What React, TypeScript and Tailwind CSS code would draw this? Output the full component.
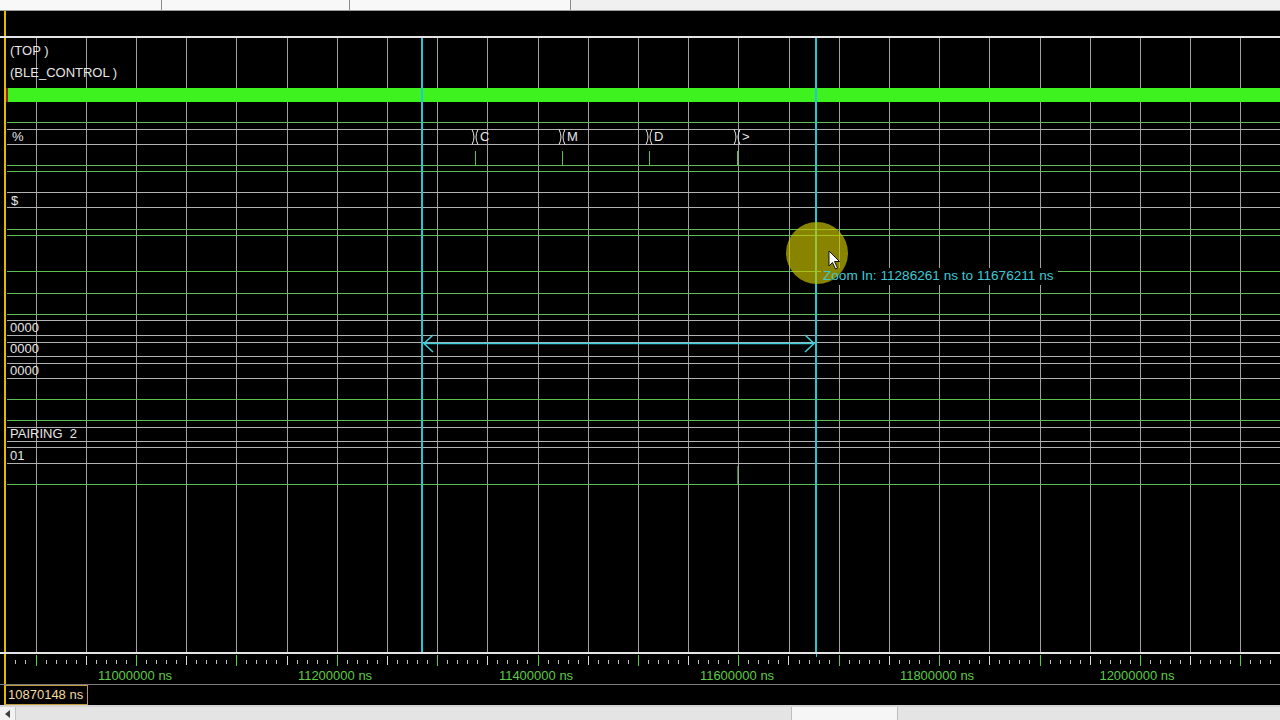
import React from 'react';

const GREEN = '#5cbf52';
const GRAY = '#b2b2b2';

// horizontal trace lines of the wave window (absolute y)
const HLINES: [number, 'g' | 'w'][] = [
  [122, 'g'], [129, 'w'], [144, 'w'], [165, 'g'], [171, 'g'],
  [192, 'w'], [207, 'w'], [229, 'g'], [235, 'g'], [271, 'g'],
  [293, 'g'], [314, 'g'], [320, 'w'], [335, 'w'], [342, 'w'],
  [356, 'w'], [363, 'w'], [378, 'w'], [399, 'g'], [420, 'g'],
  [427, 'w'], [441, 'w'], [447, 'w'], [463, 'w'], [484, 'g'],
];

const GRID_X = Array.from({ length: 25 }, (_, k) => Math.round(35.5 + 50.2 * k) + 0.5);

const BUS_EDGES = [475, 562, 649, 737];

const TICKS = Array.from({ length: 130 }, (_, k) => k - 13)
  .map((i) => ({ i, x: Math.round(135.9 + i * 10.04) + 0.5 }))
  .filter((t) => t.x > 7 && t.x < 1280);

const RULER_LABELS = [
  { text: '11000000 ns', cls: 'left-[135px]' },
  { text: '11200000 ns', cls: 'left-[335px]' },
  { text: '11400000 ns', cls: 'left-[536px]' },
  { text: '11600000 ns', cls: 'left-[737px]' },
  { text: '11800000 ns', cls: 'left-[937px]' },
  { text: '12000000 ns', cls: 'left-[1137px]' },
];

function WaveArea() {
  return (
    <div className="relative h-[614px] bg-black">
      <svg width="1280" height="614" viewBox="0 38 1280 614" className="block" shapeRendering="crispEdges">
        {/* grid */}
        {GRID_X.map((x) => (
          <line key={x} x1={x} y1={38} x2={x} y2={652} stroke="#a0a0a0" strokeWidth={1} />
        ))}
        {HLINES.map(([y, c]) => (
          <line key={y} x1={7} y1={y + 0.5} x2={1280} y2={y + 0.5} stroke={c === 'g' ? GREEN : GRAY} strokeWidth={1.2} />
        ))}
        {/* top bus */}
        <rect x={7} y={88} width={1273} height={14} fill="#3ef21f" />
        <rect x={6} y={88} width={2} height={14} fill="#8a2a08" />
        {/* bus transitions + pulses */}
        {BUS_EDGES.map((x) => (
          <g key={x}>
            <path d={`M${x - 3} 129.5 Q${x + 1} 137 ${x - 3} 144.5 M${x + 3} 129.5 Q${x - 1} 137 ${x + 3} 144.5`} stroke="#e8e8e8" strokeWidth={1} fill="none" shapeRendering="auto" />
            <line x1={x + 0.5} y1={151} x2={x + 0.5} y2={165} stroke={GREEN} strokeWidth={1} />
          </g>
        ))}
        <line x1={737.5} y1={466} x2={737.5} y2={484} stroke="#3f7a3a" strokeWidth={1} />
        {/* cursors */}
        <rect x={421} y={38} width={2} height={614} fill="#22c6d6" />
        <rect x={815} y={38} width={2} height={614} fill="#22c6d6" />
        {/* zoom span arrow */}
        <g stroke="#3fd0dc" strokeWidth={1.5} fill="none" shapeRendering="auto">
          <line x1={424} y1={343.5} x2={814} y2={343.5} />
          <path d="M433 335 L424 343.5 L433 352" />
          <path d="M805 335 L814 343.5 L805 352" />
        </g>
        {/* yellow time cursor */}
        <rect x={4} y={38} width={2} height={614} fill="#e6b800" />
        {/* tooltip backdrop, then mouse highlight */}
        <rect x={821} y={268} width={237} height={17} fill="#000" />
        <circle cx={817} cy={253} r={31} fill="#c8c300" fillOpacity={0.68} shapeRendering="auto" />
        <path
          d="M829 251 L829 266 L832.5 262.5 L835.5 269 L837.5 268 L834.5 261.5 L839.5 261.5 Z"
          fill="#fff"
          stroke="#000"
          strokeWidth={0.9}
          shapeRendering="auto"
        />
      </svg>

      <div className="absolute inset-0 text-[13px] leading-4 text-[#e6e6e6]">
        <span className="absolute left-[10px] top-[5px]">(TOP )</span>
        <span className="absolute left-[10px] top-[27px]">(BLE_CONTROL )</span>
        <span className="absolute left-[12px] top-[91px]">%</span>
        <span className="absolute left-[480px] top-[91px]">C</span>
        <span className="absolute left-[567px] top-[91px]">M</span>
        <span className="absolute left-[654px] top-[91px]">D</span>
        <span className="absolute left-[742px] top-[91px]">&gt;</span>
        <span className="absolute left-[11px] top-[155px]">$</span>
        <span className="absolute left-[10px] top-[282px]">0000</span>
        <span className="absolute left-[10px] top-[303px]">0000</span>
        <span className="absolute left-[10px] top-[325px]">0000</span>
        <span className="absolute left-[10px] top-[388px]">PAIRING&nbsp; 2</span>
        <span className="absolute left-[10px] top-[410px]">01</span>
        <span className="absolute left-[823px] top-[230px] text-[13.6px] text-[#3cc9d6] whitespace-nowrap">
          Zoom In: 11286261 ns to 11676211 ns
        </span>
      </div>
    </div>
  );
}

function Ruler() {
  return (
    <div className="relative h-[30px] bg-black">
      <svg width="1280" height="30" viewBox="0 654 1280 30" className="block" shapeRendering="crispEdges">
        <rect x={4} y={654} width={2} height={30} fill="#e6b800" />
        <line x1={816} y1={654} x2={816} y2={657} stroke="#22c6d6" strokeWidth={1} />
        {TICKS.map(({ i, x }) => {
          const mod10 = ((i % 10) + 10) % 10;
          const mod5 = ((i % 5) + 5) % 5;
          if (mod10 === 0) return <line key={i} x1={x} y1={655} x2={x} y2={666} stroke="#5cc84a" strokeWidth={1} />;
          if (mod5 === 0) return <line key={i} x1={x} y1={656} x2={x} y2={665} stroke="#d8d8d8" strokeWidth={1} />;
          return <line key={i} x1={x} y1={660} x2={x} y2={664} stroke="#bdbdbd" strokeWidth={1} />;
        })}
      </svg>
      {RULER_LABELS.map((l) => (
        <span key={l.text} className={`absolute top-[14px] -translate-x-1/2 text-[13px] leading-4 text-[#5ccb48] ${l.cls}`}>
          {l.text}
        </span>
      ))}
    </div>
  );
}

export default function App() {
  return (
    <div className="w-[1280px] h-[720px] overflow-hidden flex flex-col bg-black font-['Liberation_Sans',Arial,sans-serif]">
      {/* header strip */}
      <div className="h-[11px] flex bg-[#f0f0f0] border-b border-[#9c9c9c]">
        <div className="w-[162px] bg-[#f8f8f8] border-r border-[#8a8a8a]" />
        <div className="w-[188px] bg-[#f8f8f8] border-r border-[#8a8a8a]" />
        <div className="w-[221px] bg-[#f8f8f8] border-r border-[#8a8a8a]" />
        <div className="flex-1" />
      </div>

      {/* cursor band */}
      <div className="h-[25px] bg-black">
        <div className="ml-[4px] w-[2px] h-full bg-[#e6b800]" />
      </div>
      <div className="h-[2px] bg-[#e4e4e4]" />

      <WaveArea />

      <div className="h-[2px] bg-[#e4e4e4]" />
      <Ruler />
      <div className="h-[1px] bg-[#7c7c7c]" />

      {/* cursor time */}
      <div className="h-[20px] bg-black flex">
        <div className="ml-[4px] w-[84px] h-full border border-[#c29a3c] border-l-2 border-l-[#e6b800] flex items-center px-[2px] text-[13px] leading-4 text-[#f2dba0] whitespace-nowrap">
          10870148 ns
        </div>
      </div>
      <div className="h-[2px] bg-[#d4d4d4]" />

      {/* horizontal scrollbar */}
      <div className="h-[13px] flex bg-[#e4e4e4]">
        <div className="w-[16px] h-full bg-[#f2f2f2] border-r border-[#c4c4c4] flex items-center justify-center">
          <svg width="6" height="8" viewBox="0 0 6 8">
            <polygon points="5,0 5,8 0,4" fill="#404040" />
          </svg>
        </div>
        <div className="w-[775px]" />
        <div className="w-[107px] h-full bg-[#f6f6f6] border-x border-[#bcbcbc]" />
        <div className="flex-1" />
      </div>
    </div>
  );
}
